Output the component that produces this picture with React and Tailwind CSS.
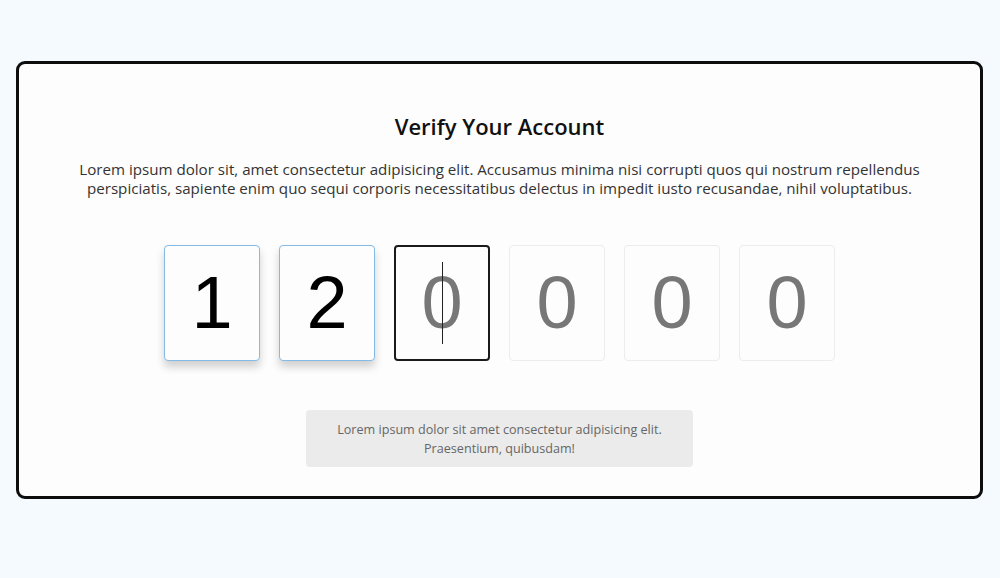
import React, { useState } from 'react';

const FONT = { fontFamily: '"Open Sans", Lato, sans-serif' };

function DigitBox({ value, state }) {
    // state: filled | active | empty
    const boxClass =
        state === 'filled' ? 'border border-[#84bbe6] shadow-[0_6px_8px_rgba(0,0,0,0.18)]' :
        state === 'active' ? 'border-2 border-[#1a1a1a]' :
        'border border-[#ececec]';
    const digitClass = state === 'filled' ? 'text-black' : 'text-[#777777]';

    return (
        <div className={`relative w-[96px] h-[116px] rounded-[4px] bg-[#fdfdfd] flex items-center justify-center ${boxClass}`}>
            <span className={`text-[74px] leading-none ${digitClass}`} style={{ fontFamily: '"Liberation Sans", Arial, sans-serif' }}>
                {value}
            </span>
            {state === 'active' && (
                <span className="absolute left-[46px] top-[15px] w-px h-[82px] bg-[#222]" />
            )}
        </div>
    );
}

export default function App() {
    const [digits] = useState(['1', '2', '0', '0', '0', '0']);
    const activeIndex = 2;

    return (
        <div className="w-[1000px] h-[578px] bg-[#f5faff] pt-[61px] px-[16px]" style={FONT}>
            <div className="w-[967px] h-[438px] border-[3px] border-[#0d0d0d] rounded-[9px] bg-[#fdfdfd] flex flex-col items-center pt-[47px]">
                <h1 className="text-[22px] font-semibold text-[#111] leading-[30px]">Verify Your Account</h1>
                <p className="mt-[19px] max-w-[870px] text-[15.15px] leading-[19px] text-[#333] text-center">
                    Lorem ipsum dolor sit, amet consectetur adipisicing elit. Accusamus minima nisi corrupti quos qui nostrum repellendus perspiciatis, sapiente enim quo sequi corporis necessitatibus delectus in impedit iusto recusandae, nihil voluptatibus.
                </p>
                <div className="mt-[47px] flex gap-[19px]">
                    {digits.map((d, i) => (
                        <DigitBox key={i} value={d} state={i < activeIndex ? 'filled' : i === activeIndex ? 'active' : 'empty'} />
                    ))}
                </div>
                <div className="mt-[49px] w-[387px] h-[57px] rounded-[4px] bg-[#ebebeb] flex items-center justify-center text-center text-[12.6px] leading-[19px] text-[#666] px-4">
                    Lorem ipsum dolor sit amet consectetur adipisicing elit. Praesentium, quibusdam!
                </div>
            </div>
        </div>
    );
}
